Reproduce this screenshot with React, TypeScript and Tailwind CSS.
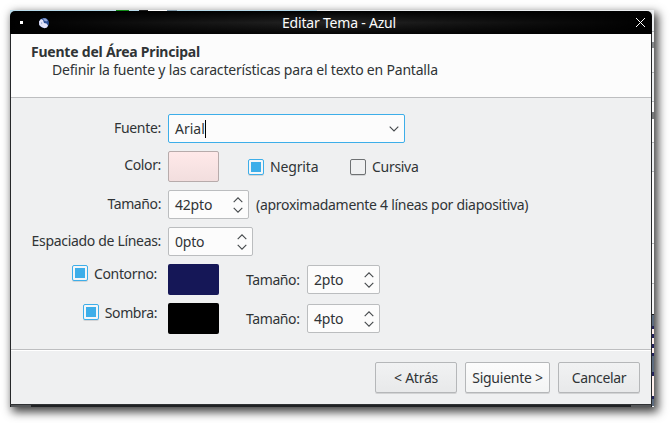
import type { ReactNode } from "react";

function Check({ on = false }: { on?: boolean }) {
  return (
    <span
      className={
        "box-border flex h-4 w-4 shrink-0 items-center justify-center rounded-[2px] border shadow-[0_1px_0_#d3d4d6] " +
        (on ? "border-[#3daee9] bg-[#f4f6f8]" : "border-[#6e7173] bg-[#eff0f1]")
      }
    >
      {on && <span className="h-[10px] w-[10px] bg-[#3daee9]" />}
    </span>
  );
}

function Spin({ value, width }: { value: string; width: string }) {
  return (
    <div className={"flex h-[29px] items-center justify-between rounded-[2px] border border-[#bbbdbf] bg-[#fcfcfc] pl-[6px] pr-[5px] " + width}>
      <span className="tracking-[-0.2px]">{value}</span>
      <svg width="10" height="16" viewBox="0 0 10 16" fill="none" stroke="#45494c" strokeWidth="1.1">
        <path d="M.7 5.2 5 .9l4.3 4.3M.7 10.8 5 15.1l4.3-4.3" />
      </svg>
    </div>
  );
}

function Label({ children, look }: { children: ReactNode; look: string }) {
  return <div className={"flex w-[150px] shrink-0 justify-end whitespace-nowrap " + look}>{children}</div>;
}

function Button({ children, look }: { children: ReactNode; look: string }) {
  return (
    <button className={"h-[31px] whitespace-nowrap rounded-[2px] border border-[#b5b7b9] bg-linear-to-b shadow-[0_1px_0_#d2d3d4] " + look}>
      {children}
    </button>
  );
}

// Slices of the window behind, seen along the right edge of the dialog.
const edge = [
  "h-[20px] bg-[#eceff1]",
  "h-px bg-[#b5b8ba]",
  "h-[10px] bg-[#f4f5f6]",
  "h-[6px] bg-[#85888b]",
  "h-[24px] bg-[#f4f5f6]",
  "h-px bg-[#b5b8ba]",
  "h-[28px] bg-[#eceff1]",
  "h-px bg-[#b5b8ba]",
  "h-[10px] bg-[#fcfcfc]",
  "h-[7px] bg-[#77797b]",
  "h-[23px] bg-[#fcfcfc]",
  "h-px bg-[#b5b8ba]",
  "h-[28px] bg-[#eceff1]",
  "h-px bg-[#b5b8ba]",
  "h-[71px] bg-[#fcfcfc]",
  "h-px bg-[#b5b8ba]",
  "h-[39px] bg-[#fcfcfc]",
  "h-px bg-[#b5b8ba]",
  "h-[30px] bg-[#f4f5f6]",
  "h-px bg-[#222]",
  "h-[11px] bg-[#5d6c7f]",
  "h-[3px] bg-[#24245c]",
  "h-[5px] bg-[#fff0ec]",
  "h-[4px] bg-[#24245c]",
  "h-[6px] bg-[#fff0ec]",
  "h-[4px] bg-[#24245c]",
  "h-[5px] bg-[#fff0ec]",
  "h-[3px] bg-[#24245c]",
  "h-[16px] bg-[#5d6c7f]",
  "h-[4px] bg-[#24245c]",
  "h-[20px] bg-[#fff0ec]",
  "h-[3px] bg-[#24245c]",
  "h-[7px] bg-[#5d6c7f]",
];

export default function App() {
  return (
    <div className="h-[423px] w-[670px] overflow-hidden bg-white pl-[10px] pt-[10px] font-['Noto_Sans','Open_Sans',sans-serif] text-[14px] leading-[18px] text-[#303436]">
      <div className="flex h-[397px] w-[644px] flex-col bg-[#26282a] shadow-[3px_4px_9px_1px_rgba(0,0,0,0.75)]">
        <div className="flex h-px shrink-0 bg-[#b9dcec]">
          <span className="ml-[106px] w-[13px] bg-[#128c18]" />
          <span className="ml-[10px] w-[9px] bg-[#222]" />
          <span className="w-[19px] bg-white" />
          <span className="w-[10px] bg-[#829bab]" />
          <span className="ml-[140px] flex-1 bg-[#eceff1]" />
        </div>
        <div className="flex min-h-0 flex-1">
          <div className="flex w-[642px] flex-col">
            <div className="shrink-0 bg-linear-to-r from-[#b9dcec] to-[#e4e7e9]">
              <header className="flex h-[23px] items-center rounded-t-[5px] bg-[linear-gradient(to_right,#000_0%,transparent_50%,#000_100%),linear-gradient(to_bottom,#000,#242424_50%,#050505)]">
                <span className="ml-[10px] h-[3px] w-[3px] bg-white" />
                <svg className="ml-[15px]" width="12" height="12" viewBox="0 0 12 12">
                  <circle cx="6" cy="6" r="5" fill="#2b4f96" />
                  <path d="M1 4.5 3 2l2 1 1 3 2.500.5 1.500 2-1 2-2.500.8L3.500 10 1.200 8z" fill="#e3e4fb" />
                  <path d="m5 1.200 3 .3 1.800 2-1.500 1L6 3.500zM3 5l1.500 1L3.500 7.500zM6 8.500l2 .5" fill="#8fa3d4" />
                </svg>
                <span className="w-[585px] pr-[7px] text-center tracking-[-0.2px] text-[#fcfcfc]">Editar Tema - Azul</span>
                <svg width="11" height="11" viewBox="0 0 11 11" stroke="#fff" strokeWidth="1">
                  <path d="m1 1 9 9M10 1 1 10" />
                </svg>
              </header>
            </div>
            <main className="ml-px flex w-[640px] flex-1 flex-col bg-[#eff0f1]">
              <div className="h-[64px] shrink-0 border-b border-[#bdbec0] bg-[#fcfcfc] pl-[20px] pt-[9px]">
                <p className="font-bold tracking-[-0.22px]">Fuente del Área Principal</p>
                <p className="pl-[21px] tracking-[-0.2px]">Definir la fuente y las características para el texto en Pantalla</p>
              </div>
              <div className="flex h-[252px] shrink-0 flex-col border-b border-[#bdbec0] pt-[16px]">
                <div className="flex h-[29px] items-center">
                  <Label look="pb-[2px] tracking-[-0.3px]">Fuente:</Label>
                  <div className="ml-[7px] flex h-[29px] w-[237px] items-center justify-between rounded-[2px] border border-[#3daee9] bg-[#fcfcfc] pl-[6px] pr-[5px]">
                    <span className="border-r border-black">Arial</span>
                    <svg width="10" height="6" viewBox="0 0 10 6" fill="none" stroke="#45494c" strokeWidth="1.1">
                      <path d="m.7.7 4.3 4.3L9.3.7" />
                    </svg>
                  </div>
                </div>
                <div className="mt-[8px] flex h-[31px] items-center">
                  <Label look="pb-[4px] tracking-[-0.35px]">Color:</Label>
                  <span className="ml-[7px] h-[31px] w-[51px] rounded-[2px] border border-[#b7abab] bg-linear-to-b from-[#ffe9e9] to-[#f2dede]" />
                  <span className="ml-[29px]"><Check on /></span>
                  <span className="ml-[6px] w-[80px] tracking-[-0.15px]">Negrita</span>
                  <Check />
                  <span className="ml-[6px] tracking-[-0.3px]">Cursiva</span>
                </div>
                <div className="mt-[8px] flex h-[29px] items-center">
                  <Label look="pb-[2px] tracking-[-0.4px]">Tamaño:</Label>
                  <div className="ml-[7px]"><Spin value="42pto" width="w-[81px]" /></div>
                  <span className="ml-[7px] whitespace-nowrap tracking-[-0.29px]">(aproximadamente 4 líneas por diapositiva)</span>
                </div>
                <div className="mt-[8px] flex h-[29px] items-center">
                  <Label look="pb-[2px] tracking-[-0.32px]">Espaciado de Líneas:</Label>
                  <div className="ml-[7px]"><Spin value="0pto" width="w-[85px]" /></div>
                </div>
                <div className="mt-[8px] flex h-[31px] items-center">
                  <div className="flex w-[146px] justify-end gap-[6px] pb-[12px] tracking-[-0.35px]"><Check on /><span>Contorno:</span></div>
                  <span className="ml-[11px] h-[31px] w-[51px] rounded-[2px] bg-[#151757]" />
                  <span className="ml-[27px] w-[54px] whitespace-nowrap tracking-[-0.4px]">Tamaño:</span>
                  <div className="ml-[7px]"><Spin value="2pto" width="w-[73px]" /></div>
                </div>
                <div className="mt-[8px] flex h-[31px] items-center">
                  <div className="flex w-[146px] justify-end gap-[6px] pb-[12px] tracking-[-0.4px]"><Check on /><span>Sombra:</span></div>
                  <span className="ml-[11px] h-[31px] w-[51px] rounded-[2px] bg-black" />
                  <span className="ml-[27px] w-[54px] whitespace-nowrap tracking-[-0.4px]">Tamaño:</span>
                  <div className="ml-[7px]"><Spin value="4pto" width="w-[73px]" /></div>
                </div>
              </div>
              <footer className="flex flex-1 justify-end gap-[8px] border-t border-white pr-[11px] pt-[11px]">
                <Button look="w-[82px] tracking-[-0.25px] from-[#f1f2f3] to-[#e8e9ea]">&lt; Atrás</Button>
                <Button look="w-[85px] tracking-[-0.25px] from-[#fcfcfc] to-[#f3f4f4]">Siguiente &gt;</Button>
                <Button look="w-[82px] tracking-[-0.35px] from-[#f1f2f3] to-[#e8e9ea]">Cancelar</Button>
              </footer>
            </main>
            <div className="flex h-[3px] shrink-0 justify-between border-t border-[#303234] bg-[#202224] px-px">
              <span className="w-[20px] bg-[#555759]" />
              <span className="w-[20px] bg-[#555759]" />
            </div>
          </div>
          <div className="w-[2px] bg-[#eceff1]">
            {edge.map((look, i) => (
              <div key={i} className={look} />
            ))}
          </div>
        </div>
      </div>
    </div>
  );
}
